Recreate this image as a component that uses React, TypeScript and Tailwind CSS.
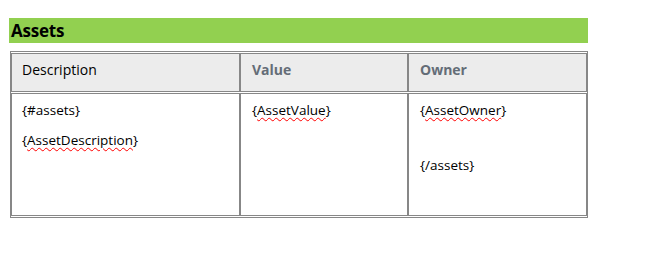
const font = { fontFamily: "'Open Sans', 'Noto Sans', sans-serif" };

const Squiggle = ({ children }: { children: string }) => (
  <span className="underline decoration-wavy decoration-[#ff0000] decoration-1 underline-offset-[2px]">{children}</span>
);

export default function App() {
  return (
    <div className="min-h-[270px] w-[664px] bg-white pl-[9px] pt-[18px] text-black" style={font}>
      <div className="flex h-[25px] w-[579px] items-center bg-[#92d050] pl-[2px]">
        <h2 className="text-[17px] font-bold leading-none tracking-[-0.2px]">Assets</h2>
      </div>

      <table className="ml-px mt-[8px] w-[578px] table-fixed border-separate border-spacing-x-0 border-spacing-y-px border border-[#878787]">
        <colgroup>
          <col className="w-[229px]" />
          <col className="w-[168px]" />
          <col className="w-[179px]" />
        </colgroup>
        <thead>
          <tr className="h-[39px] bg-[#ececec] text-left align-top">
            <th className="border border-[#878787] pl-[10px] pt-[7px] text-[14px] font-normal leading-[18px]">Description</th>
            <th className="border border-[#878787] pl-[11px] pt-[7px] text-[14px] font-bold leading-[18px] text-[#646d77]">Value</th>
            <th className="border border-[#878787] pl-[11px] pt-[7px] text-[14px] font-bold leading-[18px] text-[#646d77]">Owner</th>
          </tr>
        </thead>
        <tbody>
          <tr className="h-[123px] align-top text-[13.5px] leading-[18px]">
            <td className="border border-[#878787] pl-[10px] pt-[7px]">
              <p>{"{#assets}"}</p>
              <p className="mt-[12px]">{"{"}<Squiggle>AssetDescription</Squiggle>{"}"}</p>
            </td>
            <td className="border border-[#878787] pl-[11px] pt-[7px]">
              <p>{"{"}<Squiggle>AssetValue</Squiggle>{"}"}</p>
            </td>
            <td className="border border-[#878787] pl-[11px] pt-[7px]">
              <p>{"{"}<Squiggle>AssetOwner</Squiggle>{"}"}</p>
              <p className="mt-[37px]">{"{/assets}"}</p>
            </td>
          </tr>
        </tbody>
      </table>
    </div>
  );
}
